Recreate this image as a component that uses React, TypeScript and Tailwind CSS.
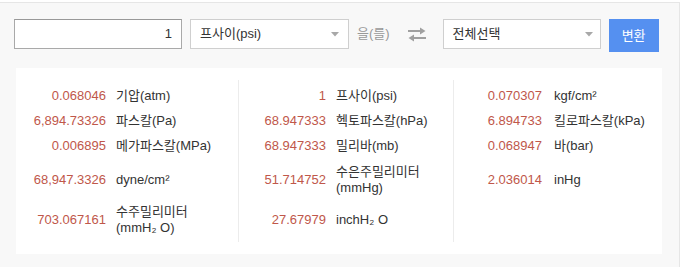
import React from "react";

type Row = { v: string; l: React.ReactNode; h: string };

const font = { fontFamily: '"Liberation Sans", "Noto Sans CJK KR", sans-serif' };

const col1: Row[] = [
  { v: "0.068046", l: "기압(atm)", h: "h-[25px]" },
  { v: "6,894.73326", l: "파스칼(Pa)", h: "h-[25px]" },
  { v: "0.006895", l: "메가파스칼(MPa)", h: "h-[25px]" },
  { v: "68,947.3326", l: "dyne/cm²", h: "h-[44px]" },
  { v: "703.067161", l: <>수주밀리미터<br />(mmH₂ O)</>, h: "h-[36px]" },
];
const col2: Row[] = [
  { v: "1", l: "프사이(psi)", h: "h-[25px]" },
  { v: "68.947333", l: "헥토파스칼(hPa)", h: "h-[25px]" },
  { v: "68.947333", l: "밀리바(mb)", h: "h-[25px]" },
  { v: "51.714752", l: <>수은주밀리미터<br />(mmHg)</>, h: "h-[44px]" },
  { v: "27.67979", l: "inchH₂ O", h: "h-[36px]" },
];
const col3: Row[] = [
  { v: "0.070307", l: "kgf/cm²", h: "h-[25px]" },
  { v: "6.894733", l: "킬로파스칼(kPa)", h: "h-[25px]" },
  { v: "0.068947", l: "바(bar)", h: "h-[25px]" },
  { v: "2.036014", l: "inHg", h: "h-[44px]" },
];

function Column({ rows, vw, gap, cls }: { rows: Row[]; vw: string; gap: string; cls: string }) {
  return (
    <div className={`flex flex-col pt-[3px] ${cls}`}>
      {rows.map((r, i) => (
        <div key={i} className={`flex items-center ${r.h}`}>
          <div className={`${vw} shrink-0 text-right text-[#c0574a]`}>{r.v}</div>
          <div className={`${gap} leading-[16px] text-[#333]`}>{r.l}</div>
        </div>
      ))}
    </div>
  );
}

function Arrow() {
  return (
    <svg width="8" height="5" viewBox="0 0 8 5" className="shrink-0">
      <path d="M0 0 L8 0 L4 4.5 Z" fill="#a8a8a8" />
    </svg>
  );
}

export default function App() {
  return (
    <div className="w-[692px] h-[267px] bg-white overflow-hidden text-[13px]" style={font}>
      <div className="mt-[2px] w-[680px] h-[265px] bg-[#f8f8f8] border-t border-r border-[#e6e6e6]">
        <div className="flex items-start pt-[16px] pl-[14px]">
          <div className="w-[168px] h-[30px] bg-white border border-[#a9a9a9] border-t-[#999] flex items-center justify-end pr-[9px] text-[#333]">
            1
          </div>
          <div className="ml-[8px] w-[159px] h-[30px] bg-white border border-[#cfcfcf] flex items-center justify-between pl-[9px] pr-[9px] text-[#333]">
            <span>프사이(psi)</span>
            <Arrow />
          </div>
          <div className="ml-[8px] h-[30px] flex items-center text-[#999]">을(를)</div>
          <div className="ml-[17px] h-[30px] flex items-center">
            <svg width="20" height="16" viewBox="0 0 20 16">
              <path d="M1 5 H15" stroke="#a0a0a0" strokeWidth="2" />
              <path d="M13 1.5 L18.5 5 L13 8.5 Z" fill="#a0a0a0" />
              <path d="M5 12 H19" stroke="#a0a0a0" strokeWidth="2" />
              <path d="M7 8.5 L1.5 12 L7 15.5 Z" fill="#a0a0a0" />
            </svg>
          </div>
          <div className="ml-[16px] w-[158px] h-[30px] bg-white border border-[#cfcfcf] flex items-center justify-between pl-[9px] pr-[7px] text-[#333]">
            <span>전체선택</span>
            <Arrow />
          </div>
          <div className="ml-[8px] w-[50px] h-[33px] bg-[#5590f0] text-white flex items-center justify-center">
            변환
          </div>
        </div>
        <div className="ml-[16px] mt-[16px] w-[646px] h-[186px] bg-white pt-[12px] flex items-start">
          <Column rows={col1} vw="w-[90px]" gap="pl-[10px]" cls="w-[222px] h-[162px]" />
          <Column rows={col2} vw="w-[87px]" gap="pl-[10px]" cls="w-[215px] h-[162px] border-l border-[#ececec]" />
          <Column rows={col3} vw="w-[88px]" gap="pl-[12px]" cls="w-[209px] h-[162px] border-l border-[#ececec]" />
        </div>
      </div>
    </div>
  );
}
